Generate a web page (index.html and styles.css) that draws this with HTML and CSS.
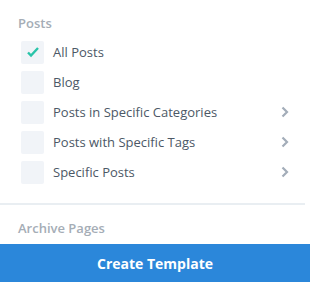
FILE: index.html
```html
<!DOCTYPE html>
<html lang="en">
<head>
    <meta charset="UTF-8">
    <meta name="viewport" content="width=device-width, initial-scale=1.0">
    <title>Template Settings</title>
    <link rel="stylesheet" href="styles.css">
</head>
<body>
    <div class="panel">
        <div class="section">
            <h4 class="section-title">Posts</h4>
            <ul class="option-list">
                <li class="option">
                    <span class="checkbox checked">
                        <svg width="14" height="14" viewBox="0 0 14 14"><path d="M2 7.5l3 3 7-7.5" fill="none" stroke="#29c4a9" stroke-width="2.4"/></svg>
                    </span>
                    <span class="option-label">All Posts</span>
                </li>
                <li class="option">
                    <span class="checkbox"></span>
                    <span class="option-label">Blog</span>
                </li>
                <li class="option">
                    <span class="checkbox"></span>
                    <span class="option-label">Posts in Specific Categories</span>
                    <svg class="chevron" width="8" height="12" viewBox="0 0 8 12"><path d="M1.5 1.5l4.5 4.5-4.5 4.5" fill="none" stroke="#a3adb9" stroke-width="2.2"/></svg>
                </li>
                <li class="option">
                    <span class="checkbox"></span>
                    <span class="option-label">Posts with Specific Tags</span>
                    <svg class="chevron" width="8" height="12" viewBox="0 0 8 12"><path d="M1.5 1.5l4.5 4.5-4.5 4.5" fill="none" stroke="#a3adb9" stroke-width="2.2"/></svg>
                </li>
                <li class="option">
                    <span class="checkbox"></span>
                    <span class="option-label">Specific Posts</span>
                    <svg class="chevron" width="8" height="12" viewBox="0 0 8 12"><path d="M1.5 1.5l4.5 4.5-4.5 4.5" fill="none" stroke="#a3adb9" stroke-width="2.2"/></svg>
                </li>
            </ul>
        </div>
        <div class="section section-last">
            <h4 class="section-title">Archive Pages</h4>
        </div>
    </div>
    <button class="create-button">Create Template</button>
</body>
</html>
```

FILE: styles.css
```css
body {
    font-family: "Open Sans", sans-serif;
    margin: 0;
    padding: 0;
    width: 310px;
    height: 282px;
    overflow: hidden;
    background-color: #fff;
    display: flex;
    flex-direction: column;
}
.panel {
    flex: 1;
    min-height: 0;
    overflow: hidden;
    width: 305px;
}
.section {
    padding: 14px 16px 16px 18px;
    border-bottom: 2px solid #e9eef2;
}
.section-last {
    border-bottom: none;
    padding-top: 14px;
}
.section-title {
    margin: 0;
    font-size: 13px;
    line-height: 18px;
    font-weight: 600;
    color: #a5adb6;
}
.option-list {
    list-style: none;
    margin: 5px 0 0;
    padding: 0 0 0 3px;
}
.option {
    display: flex;
    align-items: center;
    height: 30px;
}
.checkbox {
    width: 23px;
    height: 23px;
    background-color: #f1f4f8;
    border-radius: 2px;
    display: flex;
    align-items: center;
    justify-content: center;
    flex-shrink: 0;
}
.option-label {
    flex: 1;
    margin-left: 9px;
    font-size: 13px;
    color: #4c5866;
}
.create-button {
    flex-shrink: 0;
    width: 100%;
    height: 38px;
    border: none;
    background-color: #2b87da;
    color: #fff;
    font-family: "Open Sans", sans-serif;
    font-size: 14px;
    font-weight: 700;
    cursor: pointer;
}
```
